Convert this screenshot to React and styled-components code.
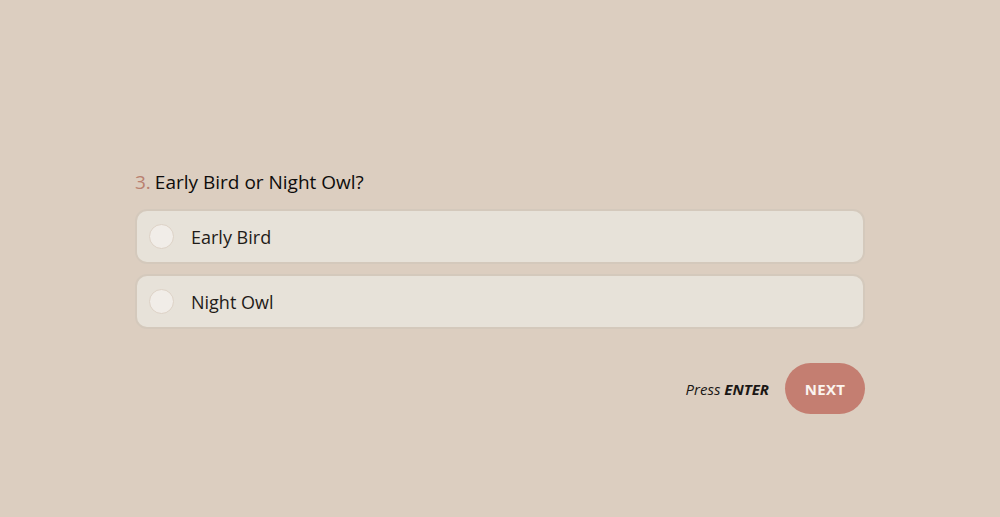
import React, { useState } from 'react';
import styled, { createGlobalStyle } from 'styled-components';

const GlobalStyle = createGlobalStyle`
  html, body {
    margin: 0;
    padding: 0;
    background: #dccec0;
    font-family: "Open Sans", "Liberation Sans", sans-serif;
  }
`;

const options = ['Early Bird', 'Night Owl'];

function App() {
  const [selected, setSelected] = useState(null);

  return (
    <Page>
      <GlobalStyle />
      <Form>
        <Question>
          <Number>3.</Number>Early Bird or Night Owl?
        </Question>
        <Options>
          {options.map((label, i) => (
            <Option key={label} onClick={() => setSelected(i)} selected={selected === i}>
              <Radio selected={selected === i} />
              <span>{label}</span>
            </Option>
          ))}
        </Options>
        <Footer>
          <Hint>
            Press <b>ENTER</b>
          </Hint>
          <NextButton>NEXT</NextButton>
        </Footer>
      </Form>
    </Page>
  );
}

const Page = styled.div`
  width: 1000px;
  height: 517px;
  box-sizing: border-box;
  padding: 166px 0 0 135px;
`;

const Form = styled.div`
  width: 730px;
  display: flex;
  flex-direction: column;
`;

const Question = styled.div`
  font-size: 19px;
  line-height: 32px;
  color: #0e0c0b;
  margin-bottom: 11px;
`;

const Number = styled.span`
  color: #b9806f;
  margin-right: 4px;
`;

const Options = styled.div`
  display: flex;
  flex-direction: column;
  gap: 10px;
`;

const Option = styled.div`
  display: flex;
  align-items: center;
  gap: 17px;
  height: 55px;
  box-sizing: border-box;
  padding: 0 12px;
  border: 2px solid #d4c9bc;
  border-radius: 12px;
  background: #e7e2d9;
  font-size: 18px;
  color: #1f1b18;
  cursor: pointer;
`;

const Radio = styled.div`
  width: 25px;
  height: 25px;
  border-radius: 50%;
  box-sizing: border-box;
  border: 1px solid #ddd2c6;
  background: ${({ selected }) => (selected ? '#c47e71' : '#f1ede8')};
`;

const Footer = styled.div`
  display: flex;
  justify-content: flex-end;
  align-items: center;
  gap: 16px;
  margin-top: 34px;
`;

const Hint = styled.div`
  font-style: italic;
  font-size: 15px;
  color: #1a1715;

  b {
    font-weight: 700;
  }
`;

const NextButton = styled.button`
  width: 80px;
  height: 51px;
  border: none;
  border-radius: 26px;
  background: #c47e71;
  color: #fbf4ef;
  font-family: inherit;
  font-size: 15px;
  font-weight: 700;
  letter-spacing: 0.3px;
  cursor: pointer;
`;

export default App;
